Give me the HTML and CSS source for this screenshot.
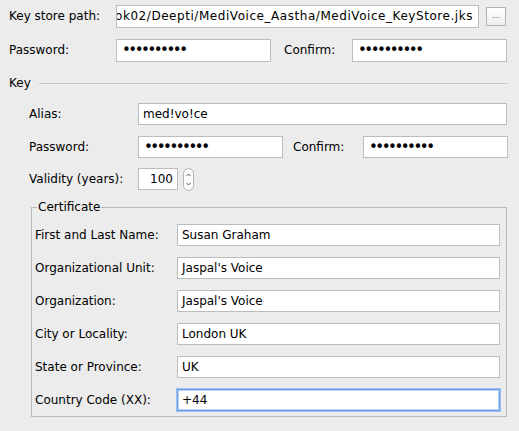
FILE: index.html
```html
<!DOCTYPE html>
<html>
<head>
<meta charset="utf-8">
<link rel="stylesheet" href="styles.css">
</head>
<body>
<div class="dialog">
  <div class="row top r1">
    <span class="lbl c-top">Key store path:</span>
    <div class="field path"><span class="val">ok02/Deepti/MediVoice_Aastha/MediVoice_KeyStore.jks</span></div>
    <div class="browse">…</div>
  </div>
  <div class="row top r2">
    <span class="lbl c-top">Password:</span>
    <div class="field pw w-top1"><span class="dots">••••••••••</span></div>
    <span class="lbl c-confirm1">Confirm:</span>
    <div class="field pw w-top2"><span class="dots">••••••••••</span></div>
  </div>

  <div class="sep"><span class="sep-title">Key</span><span class="sep-line"></span></div>

  <div class="key">
    <div class="row krow first">
      <span class="lbl c-key">Alias:</span>
      <div class="field grow"><span class="val">med!vo!ce</span></div>
    </div>
    <div class="row krow">
      <span class="lbl c-key">Password:</span>
      <div class="field pw w-key"><span class="dots">••••••••••</span></div>
      <span class="lbl c-confirm2">Confirm:</span>
      <div class="field pw w-key"><span class="dots">••••••••••</span></div>
    </div>
    <div class="row krow validity">
      <span class="lbl c-key">Validity (years):</span>
      <div class="field num"><span class="val">100</span></div>
      <div class="spinner">
        <svg width="11" height="23" viewBox="0 0 11 23">
          <rect x="0.5" y="0.5" width="10" height="22" rx="5" ry="5" fill="#fbfbfb" stroke="#b4b4b4"/>
          <path d="M3.5 8 L5.5 6 L7.5 8" fill="none" stroke="#555" stroke-width="1"/>
          <path d="M3.5 15 L5.5 17 L7.5 15" fill="none" stroke="#555" stroke-width="1"/>
        </svg>
      </div>
    </div>

    <fieldset class="cert">
      <legend>Certificate</legend>
      <div class="row crow">
        <span class="lbl c-cert">First and Last Name:</span>
        <div class="field grow"><span class="val">Susan Graham</span></div>
      </div>
      <div class="row crow">
        <span class="lbl c-cert">Organizational Unit:</span>
        <div class="field grow"><span class="val">Jaspal's Voice</span></div>
      </div>
      <div class="row crow">
        <span class="lbl c-cert">Organization:</span>
        <div class="field grow"><span class="val">Jaspal's Voice</span></div>
      </div>
      <div class="row crow">
        <span class="lbl c-cert">City or Locality:</span>
        <div class="field grow"><span class="val">London UK</span></div>
      </div>
      <div class="row crow">
        <span class="lbl c-cert">State or Province:</span>
        <div class="field grow"><span class="val">UK</span></div>
      </div>
      <div class="row crow">
        <span class="lbl c-cert">Country Code (XX):</span>
        <div class="field grow focus"><span class="val">+44</span></div>
      </div>
    </fieldset>
  </div>
</div>
</body>
</html>
```

FILE: styles.css
```css
html, body {
  margin: 0;
  padding: 0;
}
body {
  width: 519px;
  height: 431px;
  overflow: hidden;
  background: #ececec;
  font-family: "DejaVu Sans", "Liberation Sans", sans-serif;
  font-size: 12px;
  color: #000;
}
.dialog {
  padding: 5px 12px 0 9px;
}
.row {
  display: flex;
  align-items: center;
}
.top {
  height: 23px;
}
.r2 {
  margin-top: 11px;
}
.lbl {
  flex: none;
  white-space: nowrap;
  line-height: 15px;
}
.c-top { width: 107px; }
.c-confirm1 { width: 68px; margin-left: 13px; }
.c-key { width: 109px; }
.c-confirm2 { width: 70px; margin-left: 10px; }
.c-cert { width: 142px; }

.field {
  box-sizing: border-box;
  height: 100%;
  background: #fff;
  border: 1px solid #bcbcbc;
  display: flex;
  align-items: center;
  padding: 0 4px;
  white-space: nowrap;
  overflow: hidden;
  flex: none;
}
.field .val {
  line-height: 15px;
}
.path {
  width: 363px;
  justify-content: flex-end;
  padding-right: 5px;
}
.path .val {
  letter-spacing: 0.55px;
}
.browse {
  flex: none;
  box-sizing: border-box;
  width: 20px;
  height: 19px;
  margin-left: 7px;
  border: 1px solid #b3b3b3;
  background: linear-gradient(#ffffff, #eeeeee);
  color: #777;
  font-size: 9px;
  line-height: 15px;
  text-align: center;
}
.w-top1 { width: 155px; }
.w-top2 { width: 155px; }
.w-key { width: 145px; }
.grow { flex: 1 1 auto; }
.pw {
  padding-left: 5px;
}
.dots {
  font-size: 15px;
  letter-spacing: -2.5px;
  line-height: 15px;
}

.sep {
  display: flex;
  align-items: center;
  height: 15px;
  margin-top: 14px;
}
.sep-title {
  line-height: 15px;
}
.sep-line {
  flex: 1;
  height: 1px;
  background: #c8c8c8;
  margin-left: 8px;
}

.key {
  padding-left: 20px;
}
.krow {
  height: 22px;
  margin-top: 11px;
}
.krow.first {
  margin-top: 12px;
}
.krow.validity {
  margin-top: 10px;
}
.num {
  width: 40px;
  justify-content: flex-end;
}
.spinner {
  flex: none;
  margin-left: 5px;
  height: 23px;
}
.spinner svg {
  display: block;
}

.cert {
  margin: 10px 0 0 2px;
  padding: 9px 6px 5px 3px;
  border: 1px solid #b9b9b9;
  min-width: 0;
}
.cert legend {
  margin-left: 2px;
  padding: 0 1px;
  line-height: 15px;
  font-size: 12px;
}
.crow {
  height: 22px;
  margin-top: 11px;
}
.crow:first-of-type {
  margin-top: 0;
}
.focus {
  border: 1px solid #6f9fe6;
  box-shadow: 0 0 0 1px #9fc1f2, inset 0 0 0 1px #b6d0f5;
}
```
